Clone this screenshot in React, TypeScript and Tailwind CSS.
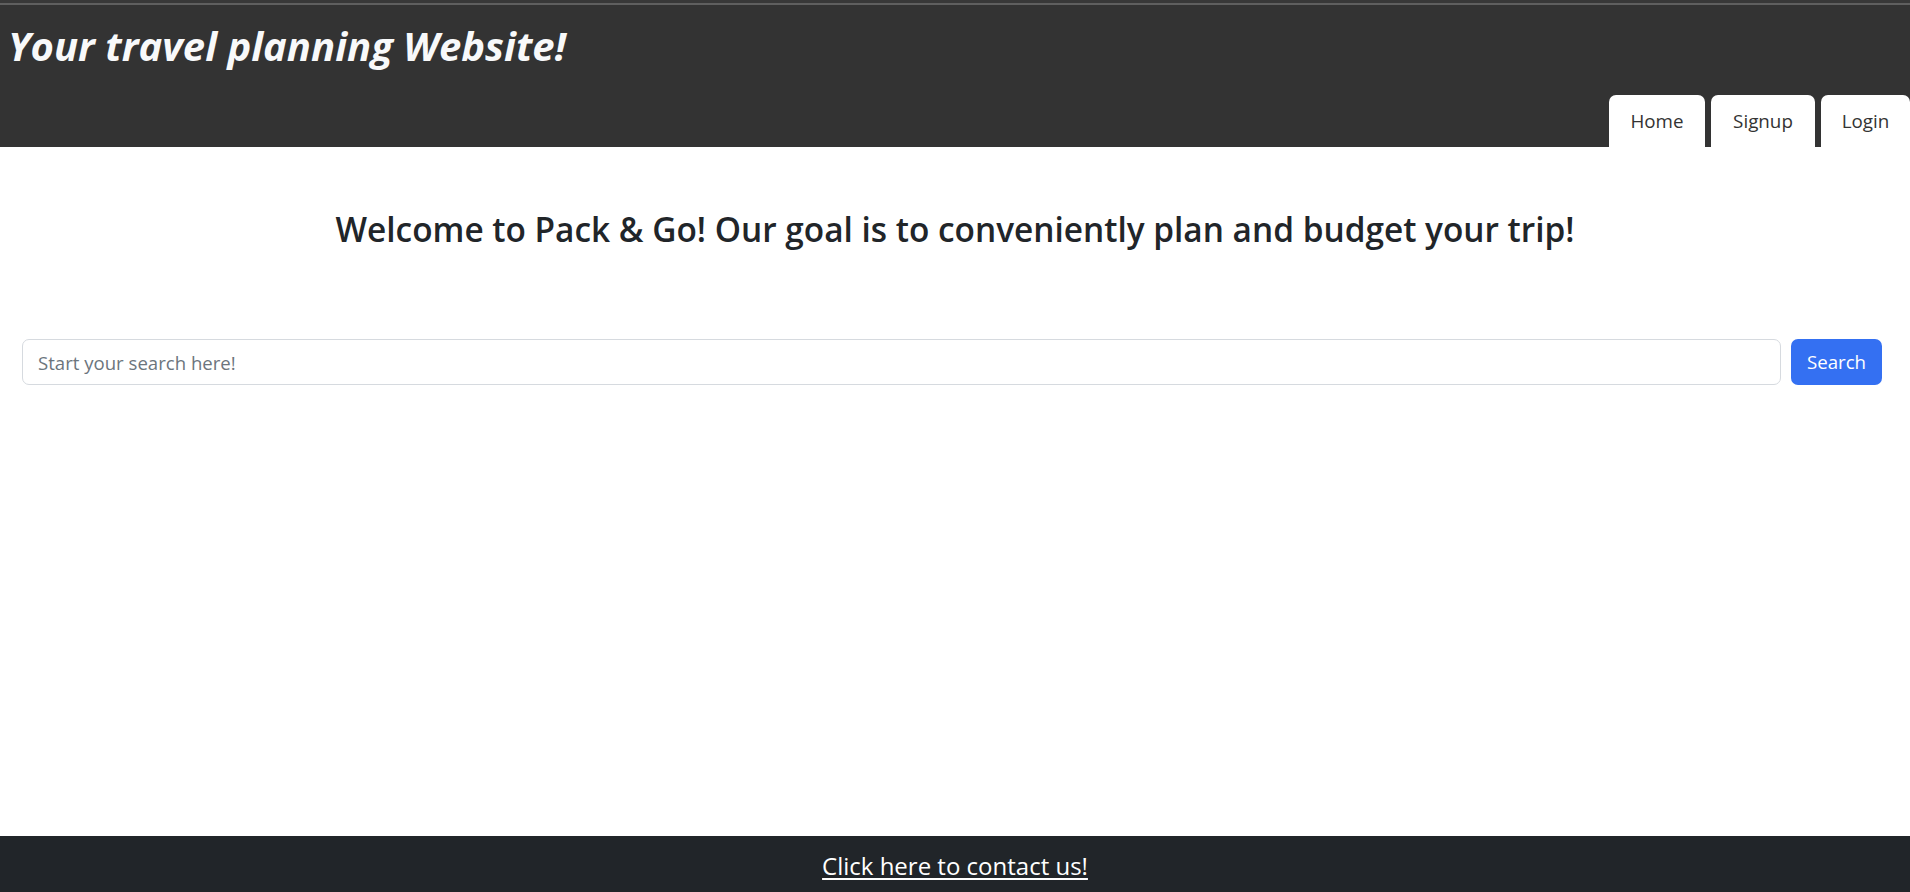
export default function App() {
  const tabs = [
    { label: "Home", w: "w-[96px]" },
    { label: "Signup", w: "w-[104px]" },
    { label: "Login", w: "w-[89px]" },
  ];

  return (
    <div className="min-h-screen flex flex-col bg-white font-['Open_Sans',sans-serif]">
      {/* header */}
      <header className="bg-[#333333]">
        <div className="h-[3px] bg-[#383838]" />
        <div className="h-[2px] bg-[#5f5f5f]" />
        <div className="h-[90px] pl-[8px] pt-[17px]">
          <h1 className="text-[40px] leading-[48px] font-bold italic text-[#f8f9fa]">
            Your travel planning Website!
          </h1>
        </div>
        <nav className="flex justify-end gap-[6px] h-[52px]">
          {tabs.map((t) => (
            <a
              key={t.label}
              href="#"
              className={`${t.w} h-full flex items-center justify-center bg-white rounded-t-[7px] text-[18.8px] text-[#333333]`}
            >
              {t.label}
            </a>
          ))}
        </nav>
      </header>

      {/* main */}
      <main className="flex-1">
        <h2 className="mt-[62px] text-center text-[33.4px] leading-[40px] font-semibold text-[#212529]">
          Welcome to Pack &amp; Go! Our goal is to conveniently plan and budget your trip!
        </h2>

        <form className="mt-[90px] flex gap-[10px] pl-[22px] pr-[28px]">
          <input
            type="text"
            placeholder="Start your search here!"
            className="flex-1 h-[46px] px-[15px] rounded-[7px] border border-[#d6dadf] text-[18.6px] text-[#212529] placeholder:text-[#6c757d] outline-none"
          />
          <button
            type="button"
            className="w-[91px] h-[46px] rounded-[7px] bg-[#3470f2] text-white text-[18.7px]"
          >
            Search
          </button>
        </form>
      </main>

      {/* footer */}
      <footer className="h-[56px] pt-[4px] bg-[#212529] flex items-center justify-center">
        <a href="#" className="text-white text-[24px] underline underline-offset-[3px]">
          Click here to contact us!
        </a>
      </footer>
    </div>
  );
}
